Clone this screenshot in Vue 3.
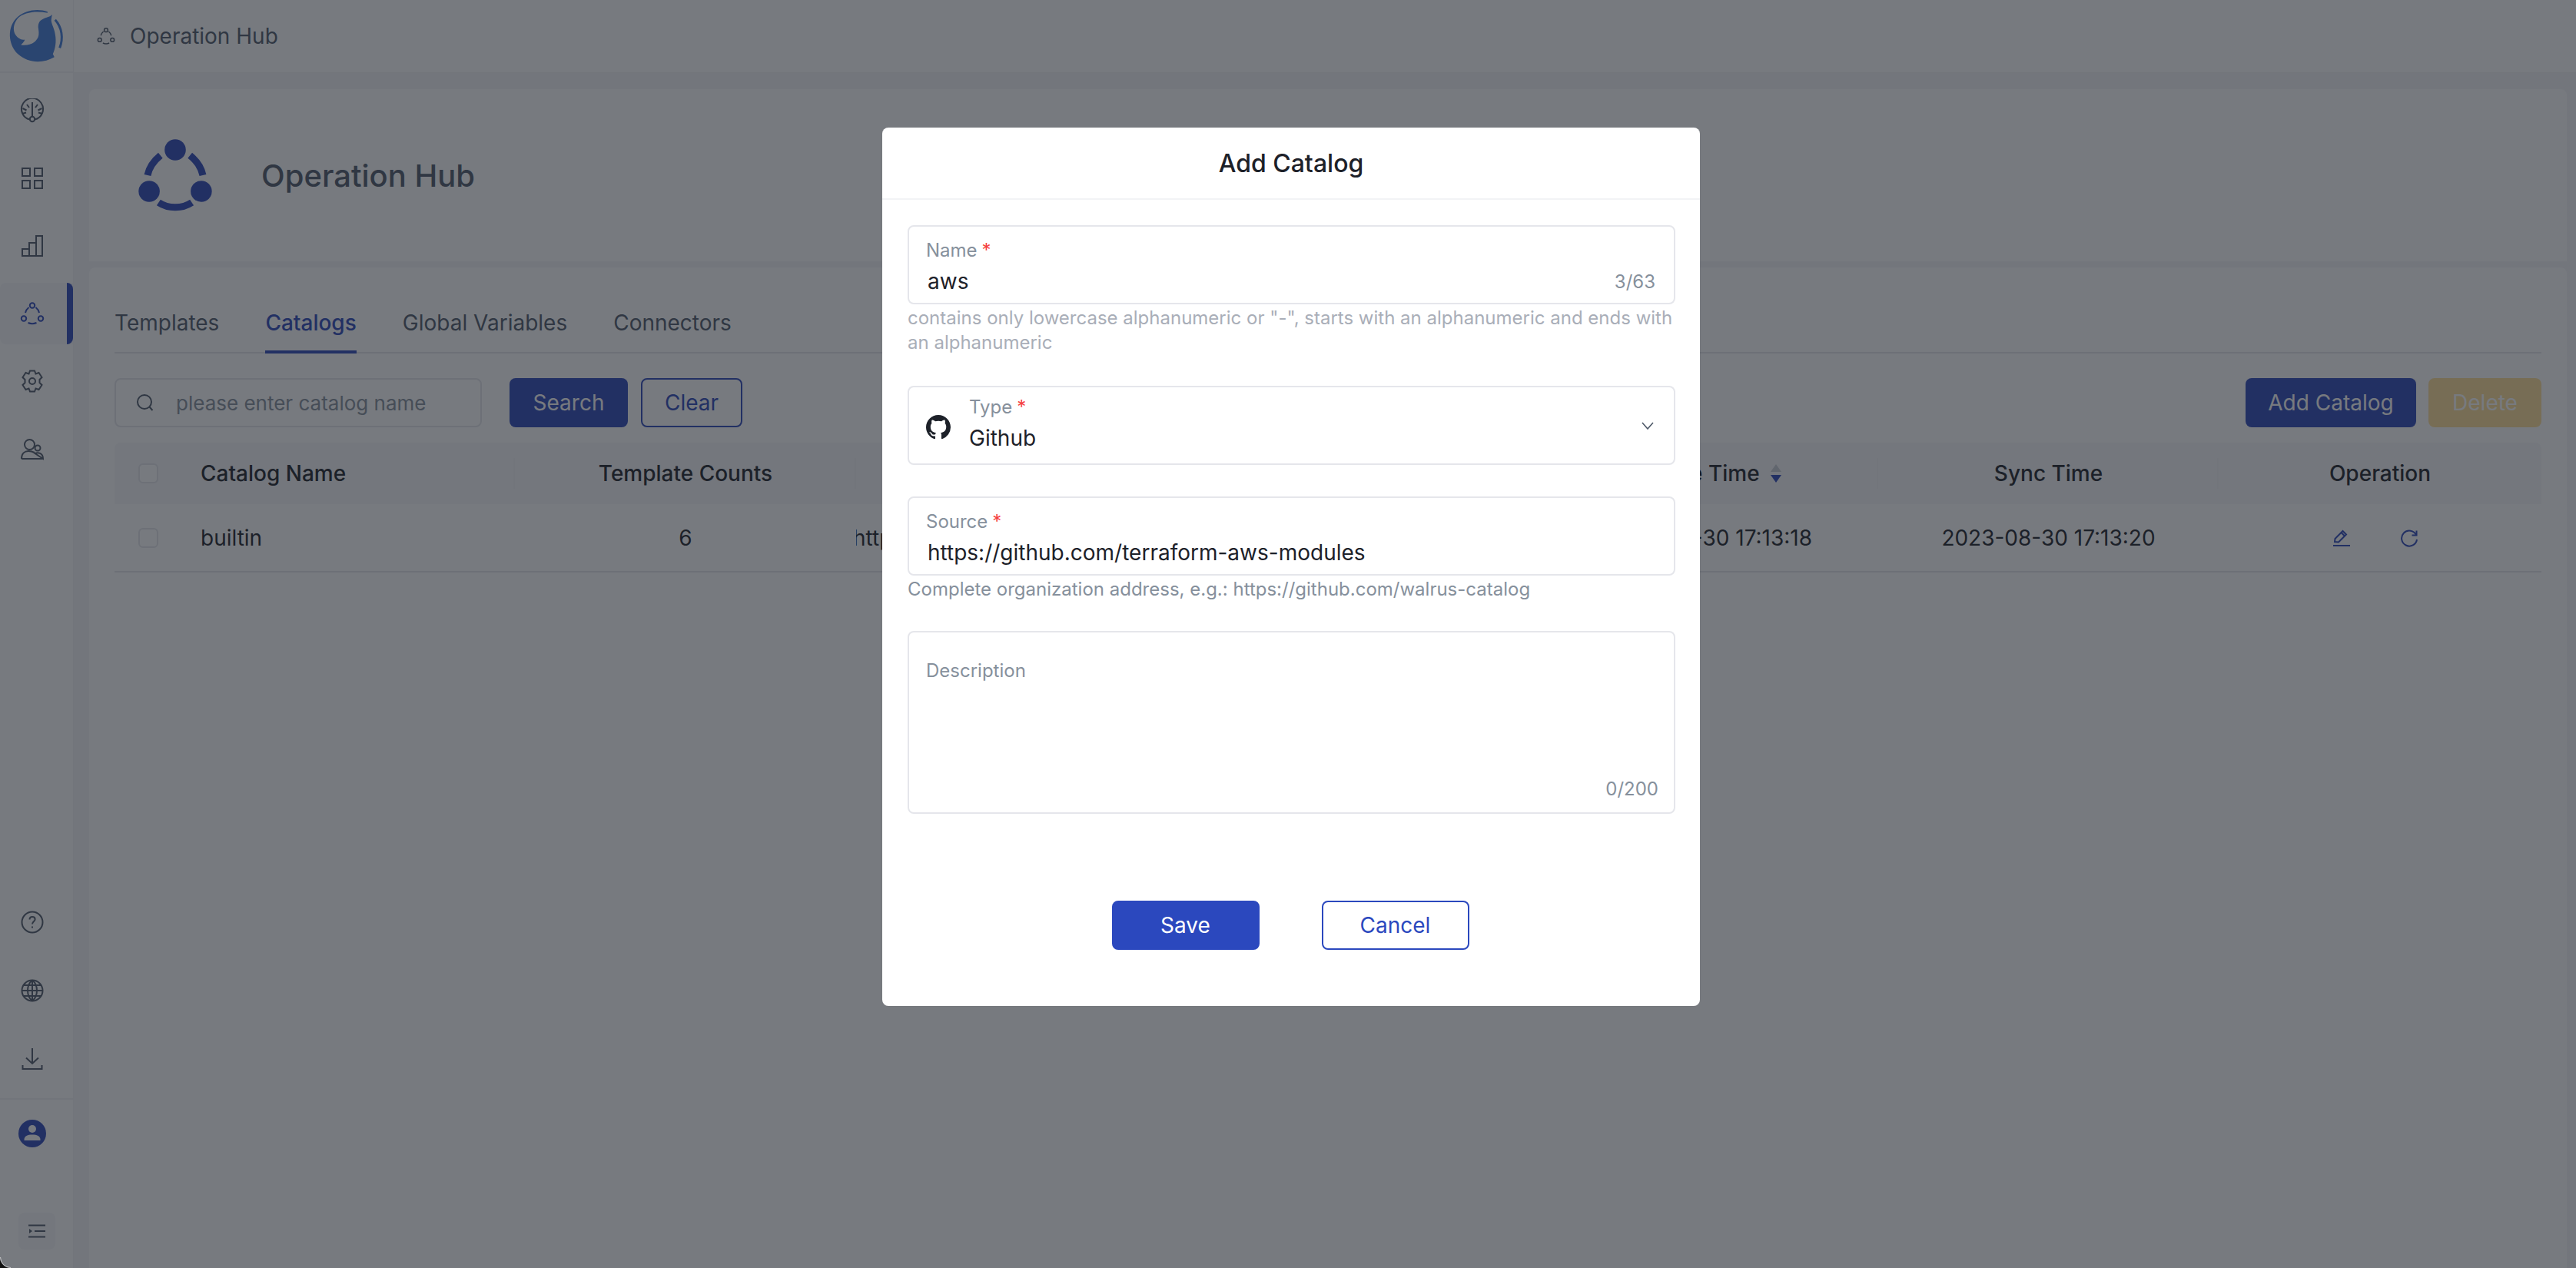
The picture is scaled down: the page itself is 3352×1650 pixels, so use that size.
<script setup>
const navTop = [
  { id: 'dash', d: ['M13 27.5A14 14 0 1 1 19 27.5', 'M16 24V5', 'M9 8l3 4M23 8l-3 4M3.5 13l5 2.5M28.5 13l-5 2.5M3 20l5-1.5M29 20l-5-1.5'], c: [[16, 27, 3.2]] },
  { id: 'apps', rects: [[3, 3, 10, 10], [19, 3, 10, 10], [3, 19, 10, 10], [19, 19, 10, 10]] },
  { id: 'chart', d: ['M3 29V20H12V29ZM12 29V12H21V29ZM21 29V3H29V29Z'] },
  { id: 'hub', active: true, d: ['M7 15C7.6 12.5 9.2 9.8 11.5 8', 'M25 15C24.4 12.5 22.8 9.8 20.5 8', 'M10.5 28C14 29.6 18 29.6 21.5 28'], c: [[16, 5.5, 3.2], [5, 22.5, 3.2], [27, 22.5, 3.2]] },
  { id: 'gear', d: ['M13 2.5H19L20.5 6.5 24.5 5 28.5 11 25.5 14 25.5 18 28.5 21 24.5 27 20.5 25.5 19 29.5H13L11.5 25.5 7.5 27 3.5 21 6.5 18 6.5 14 3.5 11 7.5 5 11.5 6.5Z'], c: [[16, 16, 4]] },
  { id: 'users', d: ['M2 29C2 22 6 19 11 19C14 19 17 20 19 21M19.5 22C23 20.5 30 21 30 29ZM2 29H30'], c: [[12.5, 10.5, 6.5], [23, 15, 3.5]] }
]

const navBottom = [
  { id: 'help', d: ['M12.5 12.5C12.5 10 14 9 16 9C18.2 9 19.6 10.4 19.6 12.2C19.6 15 16 15 16 18.5', 'M16 21.5V23.5'], c: [[16, 16, 13.5]] },
  { id: 'globe', d: ['M3 16H29M5 9H27M5 23H27M16 2.5V29.5', 'M16 2.5C8 9 8 23 16 29.5M16 2.5C24 9 24 23 16 29.5'], c: [[16, 16, 13.5]] },
  { id: 'download', d: ['M16 2V22M8 14.5L16 22L24 14.5', 'M3.5 24V29H28.5V24'] }
]

const columns = [
  { label: '', key: 'check' },
  { label: 'Catalog Name', key: 'name' },
  { label: 'Template Counts', key: 'counts' },
  { label: 'Source', key: 'source' },
  { label: 'Description', key: 'desc' },
  { label: 'Create Time', key: 'created', sortable: true },
  { label: 'Sync Time', key: 'synced' },
  { label: 'Operation', key: 'ops' }
]

const row = {
  name: 'builtin',
  counts: '6',
  source: 'https://github.com/walrus-catalog',
  desc: '',
  created: '2023-08-30 17:13:18',
  synced: '2023-08-30 17:13:20'
}

const tabs = ['Templates', 'Catalogs', 'Global Variables', 'Connectors']
</script>

<template>
  <div class="app">
    <aside class="sidebar">
      <div class="logo-cell">
        <svg class="logo" viewBox="0 0 96 96" width="96" height="95">
          <path d="M68 19C66 22 60 23 56 25C51 27 49 32 50 38C51 45 51 50 45 55C40 59 33 60 27 59C29 57 32 54 32 52C27 53 23 50 20 46C16 40 17 31 23 24C31 16 47 14 62 17L62 15.5C50 11 33 13 23 22C8 35 10 59 23 71C36 83 56 84 71 75L69 71C72 65 74 55 72 45C71 37 66 30 67 25Z" />
          <path class="logo-arc" d="M72 26C81 36 83 50 78 63" />
        </svg>
      </div>
      <nav class="nav">
        <div v-for="item in navTop" :key="item.id" class="nav-item" :class="{ active: item.active }">
          <svg class="icon" viewBox="0 0 32 32" width="32" height="32">
            <path v-for="(p, i) in item.d" :key="i" :d="p" />
            <circle v-for="(c, i) in item.c" :key="i" :cx="c[0]" :cy="c[1]" :r="c[2]" />
            <rect v-for="(r, i) in item.rects" :key="i" :x="r[0]" :y="r[1]" :width="r[2]" :height="r[3]" />
          </svg>
        </div>
      </nav>
      <div class="nav-bottom">
        <div v-for="item in navBottom" :key="item.id" class="nav-item small">
          <svg class="icon" viewBox="0 0 32 32" width="32" height="32">
            <path v-for="(p, i) in item.d" :key="i" :d="p" />
            <circle v-for="(c, i) in item.c" :key="i" :cx="c[0]" :cy="c[1]" :r="c[2]" />
          </svg>
        </div>
        <div class="avatar-row">
          <svg viewBox="0 0 36 36" width="36" height="36">
            <circle cx="18" cy="18" r="18" fill="#2c46ba" />
            <circle cx="18" cy="12" r="5" fill="#fff" />
            <path d="M7.5 26C7.5 21 12 19.5 18 19.5C24 19.5 28.5 21 28.5 26V27H7.5Z" fill="#fff" />
          </svg>
        </div>
        <div class="toggle">
          <svg class="icon thin" viewBox="0 0 24 18" width="24" height="18">
            <path d="M1 1.5H23M9 9H23M1 16.5H23" />
            <path class="solid" d="M2 6L6 9L2 12Z" />
          </svg>
        </div>
      </div>
    </aside>

    <div class="main">
      <header class="topbar">
        <svg class="icon crumb-icon" viewBox="0 0 32 32" width="24" height="24">
          <path d="M7 15C7.6 12.5 9.2 9.8 11.5 8M25 15C24.4 12.5 22.8 9.8 20.5 8M10.5 28C14 29.6 18 29.6 21.5 28" />
          <circle cx="16" cy="5.5" r="3.2" />
          <circle cx="5" cy="22.5" r="3.2" />
          <circle cx="27" cy="22.5" r="3.2" />
        </svg>
        <span>Operation Hub</span>
      </header>

      <div class="content">
        <section class="card title-card">
          <svg class="hub-icon" viewBox="0 0 32 32" width="96" height="96">
            <path d="M4 16C4.6 13 6.4 10 9.6 7.4M28 16C27.4 13 25.6 10 22.4 7.4M8.8 27.8C13 30.6 19 30.6 23.2 27.8" />
            <circle cx="16" cy="5" r="4.6" />
            <circle cx="4.7" cy="23" r="4.6" />
            <circle cx="27.3" cy="23" r="4.6" />
          </svg>
          <h1>Operation Hub</h1>
        </section>

        <section class="card list-card">
          <div class="tabs">
            <div v-for="tab in tabs" :key="tab" class="tab" :class="{ current: tab === 'Catalogs' }">{{ tab }}</div>
          </div>

          <div class="toolbar">
            <div class="search">
              <svg class="icon search-icon" viewBox="0 0 24 24" width="24" height="24">
                <circle cx="11" cy="11" r="9" />
                <path d="M17.5 17.5L21.5 22" />
              </svg>
              <input placeholder="please enter catalog name" />
            </div>
            <button class="btn primary">Search</button>
            <button class="btn outline">Clear</button>
            <div class="spacer"></div>
            <button class="btn primary add">Add Catalog</button>
            <button class="btn disabled">Delete</button>
          </div>

          <div class="table">
            <div class="thead">
              <div v-for="col in columns" :key="col.key" class="th" :class="col.key">
                <span v-if="col.key === 'check'" class="checkbox"></span>
                <template v-else>
                  <span>{{ col.label }}</span>
                  <span v-if="col.sortable" class="sorter">
                    <i class="up"></i>
                    <i class="down"></i>
                  </span>
                </template>
              </div>
            </div>
            <div class="tbody">
              <div class="td check"><span class="checkbox"></span></div>
              <div class="td name">{{ row.name }}</div>
              <div class="td counts">{{ row.counts }}</div>
              <div class="td source">{{ row.source }}</div>
              <div class="td desc">{{ row.desc }}</div>
              <div class="td created">{{ row.created }}</div>
              <div class="td synced">{{ row.synced }}</div>
              <div class="td ops">
                <svg class="op-icon" viewBox="0 0 24 24" width="24" height="24">
                  <path d="M3 17L3.5 13L13.5 3L18 7.5L8 17.5Z" />
                  <path d="M11.5 5L16 9.5" />
                  <path d="M1 22H23" />
                </svg>
                <svg class="op-icon" viewBox="0 0 24 24" width="24" height="24">
                  <path d="M21 8A10 10 0 1 0 22 14" />
                  <path d="M21.5 2.5V8.5H15.5" />
                </svg>
              </div>
            </div>
          </div>
        </section>
      </div>
    </div>

    <div class="overlay">
      <div class="modal">
        <div class="modal-title">Add Catalog</div>
        <form class="modal-body" @submit.prevent>
          <div class="field">
            <label>Name<b>*</b></label>
            <div class="field-row">
              <input value="aws" />
              <span class="count">3/63</span>
            </div>
          </div>
          <p class="hint light">contains only lowercase alphanumeric or "-", starts with an alphanumeric and ends with an alphanumeric</p>

          <div class="field select">
            <svg class="gh" viewBox="0 0 16 16" width="32" height="32">
              <path d="M8 0C3.58 0 0 3.58 0 8c0 3.54 2.29 6.53 5.47 7.59.4.07.55-.17.55-.38 0-.19-.01-.82-.01-1.49-2.01.37-2.53-.49-2.69-.94-.09-.23-.48-.94-.82-1.13-.28-.15-.68-.52-.01-.53.63-.01 1.08.58 1.23.82.72 1.21 1.87.87 2.33.66.07-.52.28-.87.51-1.07-1.78-.2-3.64-.89-3.64-3.95 0-.87.31-1.59.82-2.15-.08-.2-.36-1.02.08-2.12 0 0 .67-.21 2.2.82.64-.18 1.32-.27 2-.27s1.36.09 2 .27c1.53-1.04 2.2-.82 2.2-.82.44 1.1.16 1.92.08 2.12.51.56.82 1.27.82 2.15 0 3.07-1.87 3.75-3.65 3.95.29.25.54.73.54 1.48 0 1.07-.01 1.93-.01 2.2 0 .21.15.46.55.38A8.01 8.01 0 0 0 16 8c0-4.42-3.58-8-8-8Z" />
            </svg>
            <div class="select-text">
              <label>Type<b>*</b></label>
              <div class="value">Github</div>
            </div>
            <svg class="chevron" viewBox="0 0 16 10" width="16" height="10">
              <path d="M1 1L8 9L15 1" />
            </svg>
          </div>

          <div class="field source-field">
            <label>Source<b>*</b></label>
            <div class="field-row">
              <input value="https://github.com/terraform-aws-modules" />
            </div>
          </div>
          <p class="hint">Complete organization address, e.g.: https://github.com/walrus-catalog</p>

          <div class="field area">
            <label>Description</label>
            <span class="count">0/200</span>
          </div>

          <div class="actions">
            <button class="m-btn save">Save</button>
            <button class="m-btn cancel">Cancel</button>
          </div>
        </form>
      </div>
    </div>

    <div class="corner"><span></span></div>
  </div>
</template>

<style scoped>
* {
  box-sizing: border-box;
}

.app {
  position: relative;
  display: flex;
  width: 3352px;
  height: 1650px;
  overflow: hidden;
  background: #f5f6f8;
  color: #4e5969;
  font-family: Inter, "Liberation Sans", sans-serif;
  font-size: 28px;
}

.sidebar {
  display: flex;
  flex-direction: column;
  width: 96px;
  flex-shrink: 0;
  background: #fff;
  border-right: 1px solid #f2f3f5;
}

.logo-cell {
  height: 95px;
  border-bottom: 2px solid #f2f3f5;
}

.logo {
  display: block;
  fill: #407bda;
}

.logo-arc {
  fill: none;
  stroke: #407bda;
  stroke-width: 3;
}

.icon {
  fill: none;
  stroke: #4e5969;
  stroke-width: 2;
}

.nav {
  padding-top: 5px;
}

.nav-item {
  display: flex;
  align-items: center;
  height: 88px;
  padding-left: 26px;
  position: relative;
}

.nav-item.active {
  height: 80px;
  margin: 4px 0;
  background: #f7f8fa;
  border-radius: 8px 0 0 8px;
}

.nav-item.active .icon {
  stroke: #2c46ba;
}

.nav-item.active::after {
  content: "";
  position: absolute;
  right: 0;
  top: 0;
  bottom: 0;
  width: 8px;
  background: #2c46ba;
  border-radius: 0 8px 8px 0;
}

.nav-bottom {
  margin-top: auto;
  padding-bottom: 24px;
}

.nav-item.small {
  height: 89px;
}

.avatar-row {
  display: flex;
  align-items: center;
  height: 90px;
  margin-top: 7px;
  padding-left: 24px;
  border-top: 2px solid #f2f3f5;
}

.toggle {
  display: flex;
  align-items: center;
  justify-content: center;
  width: 48px;
  height: 48px;
  margin: 59px 0 0 24px;
  border-radius: 8px;
  background: #f7f8fa;
}

.icon.thin {
  stroke-width: 2;
}

.icon .solid {
  fill: #4e5969;
  stroke: none;
}

.main {
  flex: 1;
  min-width: 0;
}

.topbar {
  display: flex;
  align-items: center;
  gap: 19px;
  height: 95px;
  padding-left: 30px;
  background: #fff;
  border-bottom: 1px solid #f2f3f5;
}

.content {
  padding: 21px 12px 0 20px;
}

.card {
  background: #fff;
  border-radius: 8px;
}

.title-card {
  display: flex;
  align-items: center;
  gap: 64px;
  height: 224px;
  margin-bottom: 8px;
  padding-left: 64px;
  border-radius: 8px 8px 0 0;
}

.hub-icon {
  fill: #2c46ba;
}

.hub-icon path {
  fill: none;
  stroke: #2c46ba;
  stroke-width: 3;
}

.title-card h1 {
  margin: 0;
  font-size: 40px;
  font-weight: 500;
  color: #4e5969;
}

.list-card {
  height: 1400px;
  padding: 0 33px;
}

.tabs {
  display: flex;
  gap: 60px;
  height: 112px;
  padding-top: 50px;
  border-bottom: 2px solid #e5e6eb;
}

.tab {
  height: 62px;
  line-height: 44px;
  color: #4e5969;
}

.tab.current {
  color: #2c46ba;
  font-weight: 500;
  border-bottom: 4px solid #2c46ba;
}

.toolbar {
  display: flex;
  align-items: center;
  height: 64px;
  margin-top: 32px;
}

.spacer {
  flex: 1;
}

.search {
  display: flex;
  align-items: center;
  width: 478px;
  height: 64px;
  margin-right: 36px;
  padding-left: 26px;
  border: 2px solid #e5e6eb;
  border-radius: 8px;
}

.search input {
  flex: 1;
  min-width: 0;
  margin-left: 26px;
  border: 0;
  outline: 0;
  background: transparent;
  font: inherit;
  font-size: 26px;
}

.search input::placeholder {
  color: #86909c;
  opacity: 1;
}

.btn {
  height: 64px;
  border-radius: 8px;
  border: 2px solid transparent;
  font: inherit;
  padding: 0;
}

.btn.primary {
  width: 154px;
  background: #2c46ba;
  color: #fff;
}

.btn.outline {
  width: 132px;
  margin-left: 17px;
  background: #fff;
  border-color: #2c46ba;
  color: #2c46ba;
}

.btn.primary.add {
  width: 222px;
}

.btn.disabled {
  width: 147px;
  margin-left: 16px;
  background: #ffdf97;
  color: #fff;
}

.table {
  margin-top: 20px;
}

.thead,
.tbody {
  display: grid;
  grid-template-columns: 88px 433px 444px 443px 443px 444px 443px 420px;
  align-items: center;
}

.thead {
  height: 80px;
  background: #f7f8fa;
  border-radius: 8px 8px 0 0;
}

.tbody {
  height: 89px;
  border-bottom: 2px solid #e5e6eb;
}

.th {
  position: relative;
  display: flex;
  align-items: center;
  justify-content: center;
  gap: 14px;
  height: 40px;
  font-weight: 500;
  color: #1d2129;
}

.th.check {
  font-weight: 400;
}

.th:not(.check):not(.ops)::after {
  content: "";
  position: absolute;
  right: 0;
  top: 0;
  bottom: 0;
  width: 2px;
  background: #f2f3f5;
}

.th.name,
.td.name {
  justify-content: flex-start;
  padding-left: 24px;
}

.td {
  display: flex;
  align-items: center;
  justify-content: center;
  color: #1d2129;
  white-space: nowrap;
  overflow: hidden;
}

.checkbox {
  display: block;
  width: 26px;
  height: 26px;
  border: 2px solid #e5e6eb;
  border-radius: 6px;
  background: #fff;
}

.sorter {
  display: flex;
  flex-direction: column;
  gap: 4px;
}

.sorter i {
  display: block;
  width: 0;
  height: 0;
  border-left: 7px solid transparent;
  border-right: 7px solid transparent;
}

.sorter .up {
  border-bottom: 10px solid #c9cdd4;
}

.sorter .down {
  border-top: 10px solid #2c46ba;
}

.td.ops {
  justify-content: flex-start;
  gap: 64px;
  padding-left: 148px;
}

.op-icon {
  fill: none;
  stroke: #2c46ba;
  stroke-width: 2;
}

.overlay {
  position: absolute;
  inset: 0;
  display: flex;
  justify-content: center;
  align-items: flex-start;
  padding: 166px 0 0 8px;
  background: rgba(29, 33, 41, 0.6);
}

.modal {
  width: 1064px;
  height: 1143px;
  background: #fff;
  border-radius: 8px;
}

.modal-title {
  display: flex;
  align-items: center;
  justify-content: center;
  height: 94px;
  border-bottom: 2px solid #f2f3f5;
  font-size: 32px;
  font-weight: 500;
  color: #1d2129;
}

.modal-body {
  padding: 33px 32px 0 33px;
}

.field {
  position: relative;
  height: 103px;
  padding: 16px 22px 0;
  border: 2px solid #e5e6eb;
  border-radius: 8px;
}

.field label {
  display: block;
  height: 30px;
  font-size: 24px;
  line-height: 30px;
  color: #86909c;
}

.field label b {
  margin-left: 6px;
  font-weight: 400;
  color: #f53f3f;
}

.field-row {
  display: flex;
  align-items: center;
  height: 44px;
  margin-top: 3px;
}

.field input {
  flex: 1;
  min-width: 0;
  padding: 0 0 0 2px;
  border: 0;
  outline: 0;
  background: transparent;
  font: inherit;
  font-size: 28px;
  color: #1d2129;
}

.count {
  font-size: 24px;
  color: #86909c;
}

.field-row .count {
  margin-right: 2px;
}

.hint {
  margin: 0;
  font-size: 24px;
  line-height: 32px;
  padding-top: 2px;
  color: #86909c;
}

.hint.light {
  height: 106px;
  color: #a9aeb8;
}

.source-field {
  margin-top: 41px;
}

.select {
  display: flex;
  align-items: center;
  padding: 0 0 0 22px;
}

.gh {
  flex-shrink: 0;
  margin-top: 4px;
  fill: #1d2129;
}

.select-text {
  flex: 1;
  margin-left: 24px;
}

.select-text .value {
  margin-top: 3px;
  line-height: 44px;
  color: #1d2129;
}

.chevron {
  margin-right: 26px;
  fill: none;
  stroke: #4e5969;
  stroke-width: 1.6;
}

.hint + .area {
  margin-top: 38px;
}

.area {
  display: flex;
  flex-direction: column;
  height: 238px;
  padding-top: 35px;
}

.area .count {
  margin-top: auto;
  margin-bottom: 16px;
  margin-right: -2px;
  align-self: flex-end;
}

.actions {
  display: flex;
  justify-content: center;
  gap: 81px;
  margin-top: 113px;
  padding-right: 3px;
}

.m-btn {
  width: 192px;
  height: 64px;
  padding: 0;
  border-radius: 8px;
  border: 2px solid #2b48be;
  font: inherit;
}

.m-btn.save {
  background: #2b48be;
  color: #fff;
}

.m-btn.cancel {
  background: #fff;
  color: #2b48be;
}

.corner {
  position: absolute;
  left: 0;
  bottom: 0;
  width: 14px;
  height: 14px;
  overflow: hidden;
}

.corner span {
  position: absolute;
  left: 0;
  bottom: 0;
  width: 40px;
  height: 40px;
  border-radius: 14px;
  border: 1px solid #c8c9cc;
  box-shadow: 0 0 0 12px #111;
}
</style>

<style>
html,
body {
  margin: 0;
  overflow: hidden;
}
</style>
